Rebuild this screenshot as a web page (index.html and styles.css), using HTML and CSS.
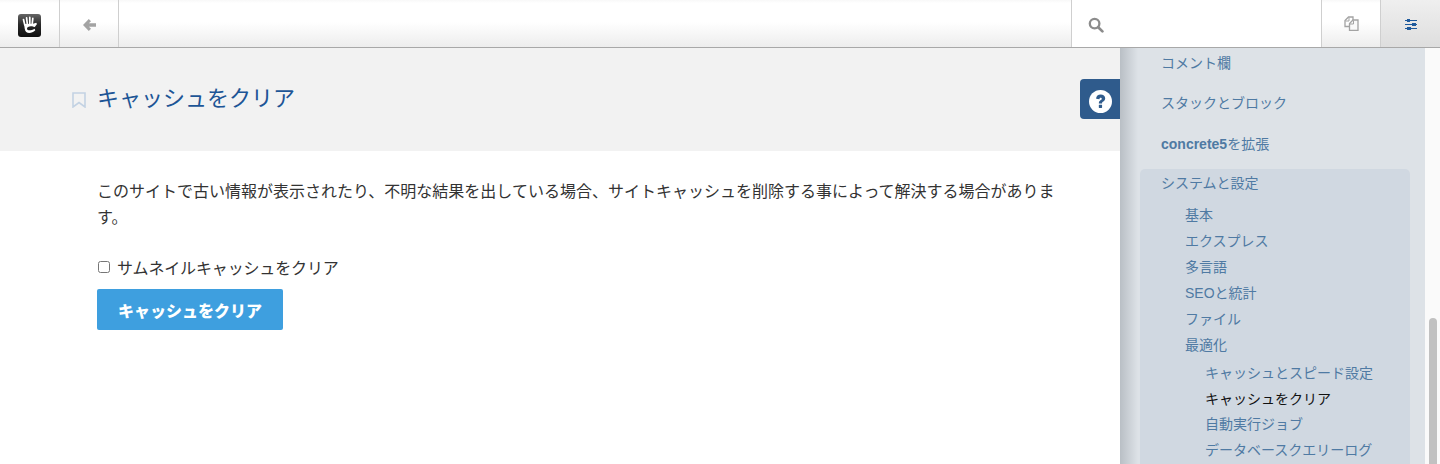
FILE: index.html
```html
<!DOCTYPE html>
<html lang="ja">
<head>
<meta charset="utf-8">
<title>キャッシュをクリア</title>
<link rel="stylesheet" href="styles.css">
</head>
<body>
<header class="toolbar">
  <div class="tool tool-logo">
    <svg class="logo" width="23" height="23" viewBox="0 0 23 23">
      <defs><linearGradient id="lg" x1="0" y1="0" x2="0" y2="1"><stop offset="0" stop-color="#666"/><stop offset="0.45" stop-color="#2a2a2a"/><stop offset="1" stop-color="#0e0e0e"/></linearGradient></defs>
      <rect width="23" height="23" rx="3" fill="url(#lg)"/>
      <path d="M5.500 5.500 L6.800 11 M8.600 3.800 L9.300 10 M11.800 3.400 L11.800 10 M14.800 4.400 L14.200 10" stroke="#fff" stroke-width="1.700" stroke-linecap="round" fill="none"/>
      <path d="M6.200 10 L15 9.800 L18.200 8.800 L19 10 L16.800 13 L15.500 12.700 C12 11.800 8.800 12.800 9 14.800 C9.200 16.800 13 16.800 16.600 14.800 L17.300 16.200 C14.500 19 10.500 19.800 8.200 18 C6.800 16.700 6.400 13.500 6.200 10 Z" fill="#fff"/>
    </svg>
  </div>
  <div class="tool tool-back">
    <svg width="13" height="12" viewBox="0 0 13 12"><path d="M5.800 0 L0 6 L5.800 12 L8 9.800 L5.900 7.800 L13 7.800 L13 4.200 L5.900 4.200 L8 2.200 Z" fill="#a3a3a3"/></svg>
  </div>
  <div class="tool-spacer"></div>
  <div class="search">
    <svg class="search-icon" width="16" height="16" viewBox="0 0 16 16"><circle cx="6.600" cy="6.600" r="4.800" fill="none" stroke="#8c8c8c" stroke-width="2.300"/><path d="M10.200 10.200 L14.400 14.400" stroke="#8c8c8c" stroke-width="2.700" stroke-linecap="round"/></svg>
  </div>
  <div class="tool tool-pages">
    <svg width="15" height="15" viewBox="0 0 15 15"><path d="M5.500 10.500 L1 10.500 L1 4.500 L4.500 1 L9 1 L9 4" fill="none" stroke="#a3a3a3" stroke-width="1.300"/><path d="M1.500 5 L5 5 L5 1.500" fill="none" stroke="#a3a3a3" stroke-width="1"/><path d="M5.500 14.300 L5.500 7.500 L9 4 L14 4 L14 14.300 Z" fill="#fafafa" stroke="#a3a3a3" stroke-width="1.300"/><path d="M6 8 L9.500 8 L9.500 4.500" fill="none" stroke="#a3a3a3" stroke-width="1"/></svg>
  </div>
  <div class="tool tool-settings">
    <svg class="settings-icon" width="12" height="11" viewBox="0 0 12 11"><path d="M0 1.500 H12 M0 5.500 H12 M0 9.500 H12" stroke="#1f5a9c" stroke-width="1"/><rect x="2" y="0" width="3" height="3" fill="#1f5a9c"/><rect x="7" y="4" width="4" height="3" fill="#1f5a9c"/><rect x="2" y="8" width="4" height="3" fill="#1f5a9c"/></svg>
  </div>
</header>
<div class="layout">
  <main class="main">
    <div class="page-head">
      <svg class="bookmark" width="14" height="16" viewBox="0 0 14 16"><path d="M1 1 H13 V15 L7 10.500 L1 15 Z" fill="none" stroke="#c3d2e3" stroke-width="1.600"/></svg>
      <h1 class="page-title">キャッシュをクリア</h1>
    </div>
    <a class="help" href="#">
      <svg class="help-icon" width="23" height="23" viewBox="0 0 22 22"><circle cx="11" cy="11" r="11" fill="#fff"/><path d="M6.800 8.300 C6.800 5.800 8.700 4.300 11.200 4.300 C13.600 4.300 15.500 5.800 15.500 8 C15.500 9.900 14.400 10.600 13.300 11.300 C12.600 11.800 12.500 12 12.500 13 L9.400 13 C9.400 11.400 9.800 10.600 10.900 9.800 C11.700 9.300 12.200 9.100 12.200 8.300 C12.200 7.700 11.800 7.300 11.100 7.300 C10.400 7.300 10 7.800 10 8.800 Z" fill="#2f5b8c"/><rect x="9.400" y="14" width="3.100" height="3.100" rx="0.400" fill="#2f5b8c"/></svg>
    </a>
    <div class="content">
      <p class="lead">このサイトで古い情報が表示されたり、不明な結果を出している場合、サイトキャッシュを削除する事によって解決する場合があります。</p>
      <label class="check"><input type="checkbox"><span class="check-text">サムネイルキャッシュをクリア</span></label>
      <button class="btn" type="button">キャッシュをクリア</button>
    </div>
  </main>
  <aside class="side">
    <nav class="panel">
      <a class="top" href="#">コメント欄</a>
      <a class="top" href="#">スタックとブロック</a>
      <a class="top strong" href="#"><b class="latin">concrete5</b>を拡張</a>
      <div class="group">
        <a class="group-title" href="#">システムと設定</a>
        <a class="l2" href="#">基本</a>
        <a class="l2" href="#">エクスプレス</a>
        <a class="l2" href="#">多言語</a>
        <a class="l2" href="#">SEOと統計</a>
        <a class="l2" href="#">ファイル</a>
        <a class="l2" href="#">最適化</a>
        <div class="sub">
          <a class="l3" href="#">キャッシュとスピード設定</a>
          <a class="l3 active" href="#">キャッシュをクリア</a>
          <a class="l3" href="#">自動実行ジョブ</a>
          <a class="l3" href="#">データベースクエリーログ</a>
        </div>
      </div>
    </nav>
    <div class="scrolltrack"><div class="scrollthumb"></div></div>
  </aside>
</div>
</body>
</html>
```
FILE: styles.css
```css
* { box-sizing: border-box; }
html, body { margin: 0; height: 100%; overflow: hidden; }
body {
  font-family: "Liberation Sans", "Noto Sans CJK JP", sans-serif;
  font-size: 16px;
  color: #333;
  background: #fff;
  display: flex;
  flex-direction: column;
}
a { text-decoration: none; }

.toolbar {
  height: 48px;
  flex: none;
  display: flex;
  border-bottom: 1px solid #a8a8a8;
  background: linear-gradient(to bottom, #f8f8f8 0, #fff 3px, #fff 22px, #ededed 47px);
}
.tool {
  display: flex;
  align-items: center;
  justify-content: center;
  flex: none;
  height: 47px;
}
.tool-logo { width: 60px; border-right: 1px solid #cfcfcf; }
.logo { margin: 3px 0 0 0; }
.tool-back { width: 59px; border-right: 1px solid #cfcfcf; padding-top: 2px; }
.tool-spacer { flex: 1; }
.search {
  width: 250px;
  flex: none;
  height: 47px;
  background: #fff;
  border-left: 1px solid #cfcfcf;
  display: flex;
  align-items: center;
  padding-left: 16px;
}
.search-icon { margin-top: 2px; }
.tool-pages { width: 59px; border-left: 1px solid #cfcfcf; }
.tool-settings {
  width: 60px;
  border-left: 1px solid #cfcfcf;
  background: linear-gradient(to bottom, #efefef, #dedede);
}
.settings-icon { margin: 2px 0 0 1px; }

.layout { flex: 1; display: flex; min-height: 0; }
.main { flex: 1; min-width: 0; position: relative; }
.page-head {
  height: 103px;
  background: #f2f2f2;
  display: flex;
  align-items: center;
  padding: 0 0 2px 72px;
  gap: 11px;
}
.bookmark { margin-top: 2px; }
.page-title {
  margin: 0;
  font-size: 22px;
  font-weight: 400;
  line-height: 30px;
  color: #1d5596;
}
.help {
  position: absolute;
  right: 0;
  top: 31px;
  width: 40px;
  height: 40px;
  background: #2f5b8c;
  border-radius: 4px 0 0 4px;
  display: flex;
  align-items: center;
  justify-content: center;
}
.help-icon { margin-top: 4px; }
.content { padding: 28px 60px 0 97px; }
.lead { margin: 0 0 23px; line-height: 26px; color: #333; }
.check { display: flex; align-items: center; height: 26px; margin-bottom: 9px; }
.check input {
  margin: 0 7px 0 1px;
  width: 12px;
  height: 12px;
}
.check-text { letter-spacing: -0.15px; }
.btn {
  display: block;
  width: 186px;
  height: 41px;
  padding: 0;
  border: 0;
  border-radius: 2px;
  background: #3e9fdf;
  color: #fff;
  font: 900 16px "Liberation Sans", "Noto Sans CJK JP", sans-serif;
}

.side { width: 320px; flex: none; display: flex; overflow: hidden; }
.panel {
  width: 305px;
  flex: none;
  background: linear-gradient(to right, #b9bfc5 0, #dde2e7 18px);
  padding: 5px 15px 0 20px;
  font-size: 14px;
}
.panel a { display: block; color: #4f7aa3; line-height: 20px; white-space: nowrap; }
.top { padding: 0 0 20px 21px; }
.strong { padding-bottom: 0; margin-top: 1px; }
.latin { font-weight: 700; }
.group {
  margin-top: 15px;
  padding: 4px 0 0 21px;
  background: #d0d8e1;
  border-radius: 5px 5px 0 0;
  height: 320px;
}
.panel .group-title { margin-bottom: 9px; }
.panel .l2 { margin-left: 24px; line-height: 26px; }
.sub { margin: 3px 0 0 44px; }
.panel .l3 { line-height: 25.700px; }
.panel .active { color: #111; }
.scrolltrack { flex: 1; background: #fafafa; padding: 270px 3px 0 4px; }
.scrollthumb { height: 200px; background: #c1c1c1; border-radius: 4px 4px 0 0; }
```
